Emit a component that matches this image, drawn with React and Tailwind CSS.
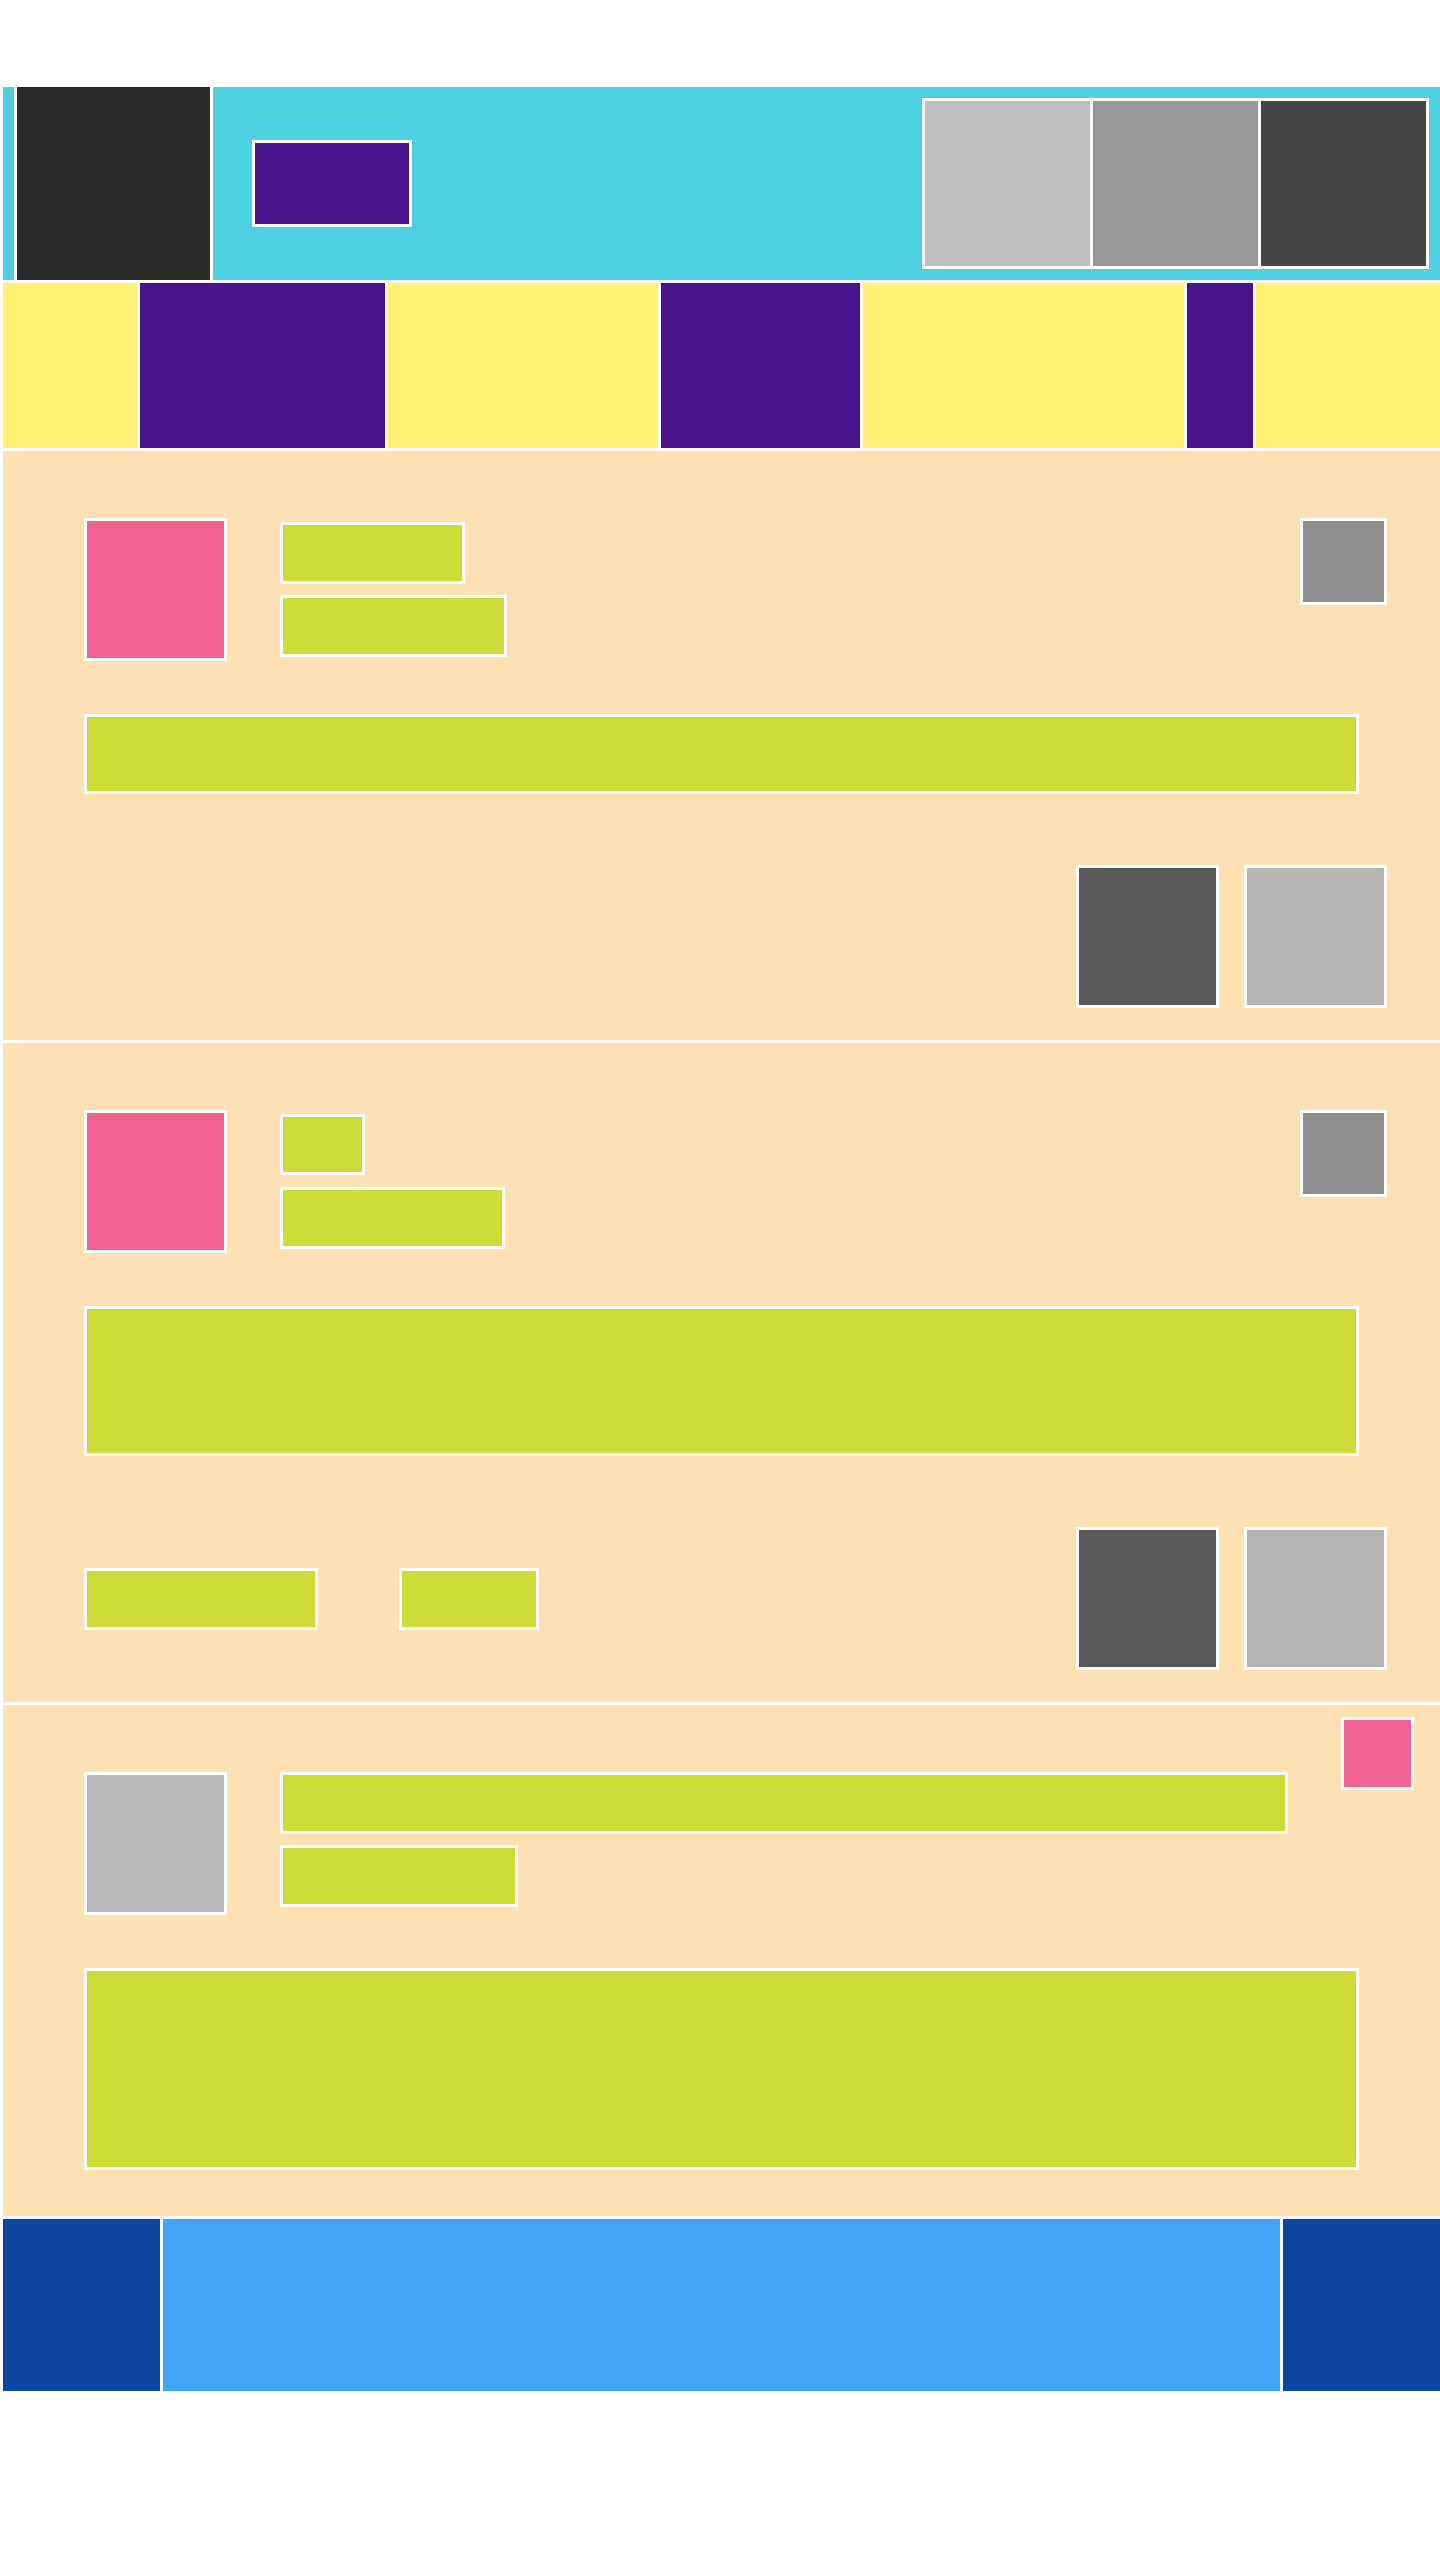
import React from 'react';

// wireframe blocks: every box carries a 3px white frame
const Box = ({ className = '' }) => (
	<div className={`shrink-0 border-[3px] border-white ${className}`} />
);

const Header = () => (
	<header className="flex h-[193px] items-stretch bg-[#4dd0e1] pl-[11px] pr-[11px]">
		<div className="w-[199px] shrink-0 border-x-[3px] border-white bg-[#2b2b2b]" />
		<div className="ml-[39px] flex items-center">
			<Box className="h-[87px] w-[160px] bg-[#4a148c]" />
		</div>
		<div className="ml-auto my-[11px] flex gap-[3px] bg-white p-[3px]">
			<div className="h-[165px] w-[165px] bg-[#bebebe]" />
			<div className="h-[165px] w-[165px] bg-[#979797]" />
			<div className="h-[165px] w-[165px] bg-[#454545]" />
		</div>
	</header>
);

const Nav = () => (
	<nav className="flex h-[165px] gap-[3px] bg-white">
		<div className="w-[134px] bg-[#fff176]" />
		<div className="w-[245px] bg-[#4a148c]" />
		<div className="w-[270px] bg-[#fff176]" />
		<div className="w-[199px] bg-[#4a148c]" />
		<div className="w-[321px] bg-[#fff176]" />
		<div className="w-[66px] bg-[#4a148c]" />
		<div className="flex-1 bg-[#fff176]" />
	</nav>
);

const Actions = () => (
	<div className="ml-auto flex gap-[25px]">
		<Box className="h-[143px] w-[143px] bg-[#5a5a5a]" />
		<Box className="h-[143px] w-[143px] bg-[#b4b4b4]" />
	</div>
);

const PostOne = () => (
	<section className="bg-[#ffe0b2] pl-[81px] pr-[81px] pt-[67px] pb-[32px]">
		<div className="-mr-[28px] flex items-start">
			<Box className="h-[143px] w-[143px] bg-[#f06292]" />
			<div className="ml-[53px] mt-[4px] flex flex-col gap-[11px]">
				<Box className="h-[62px] w-[185px] bg-[#cddc39]" />
				<Box className="h-[62px] w-[227px] bg-[#cddc39]" />
			</div>
			<Box className="ml-auto h-[87px] w-[87px] bg-[#8f8f8f]" />
		</div>
		<Box className="mt-[53px] h-[80px] w-full bg-[#cddc39]" />
		<div className="-mr-[28px] mt-[71px] flex items-center">
			<Actions />
		</div>
	</section>
);

const PostTwo = () => (
	<section className="bg-[#ffe0b2] pl-[81px] pr-[81px] pt-[67px] pb-[32px]">
		<div className="-mr-[28px] flex items-start">
			<Box className="h-[143px] w-[143px] bg-[#f06292]" />
			<div className="ml-[53px] mt-[4px] flex flex-col gap-[12px]">
				<Box className="h-[61px] w-[85px] bg-[#cddc39]" />
				<Box className="h-[62px] w-[225px] bg-[#cddc39]" />
			</div>
			<Box className="ml-auto h-[87px] w-[87px] bg-[#8f8f8f]" />
		</div>
		<Box className="mt-[53px] h-[150px] w-full bg-[#cddc39]" />
		<div className="-mr-[28px] mt-[71px] flex items-center">
			<Box className="h-[62px] w-[234px] bg-[#cddc39]" />
			<Box className="ml-[81px] h-[62px] w-[140px] bg-[#cddc39]" />
			<Actions />
		</div>
	</section>
);

const PostThree = () => (
	<section className="relative bg-[#ffe0b2] pl-[81px] pr-[81px] pt-[67px] pb-[46px]">
		<Box className="absolute right-[26px] top-[12px] h-[73px] w-[73px] bg-[#f06292]" />
		<div className="flex items-start">
			<Box className="h-[143px] w-[143px] bg-[#bababa]" />
			<div className="ml-[53px] flex flex-col gap-[11px]">
				<Box className="h-[62px] w-[1008px] bg-[#cddc39]" />
				<Box className="h-[62px] w-[238px] bg-[#cddc39]" />
			</div>
		</div>
		<Box className="mt-[53px] h-[202px] w-full bg-[#cddc39]" />
	</section>
);

const Footer = () => (
	<footer className="flex h-[172px] gap-[3px] bg-white">
		<div className="w-[157px] bg-[#0d47a1]" />
		<div className="flex-1 bg-[#42a5f5]" />
		<div className="w-[157px] bg-[#0d47a1]" />
	</footer>
);

const App = () => (
	<div className="min-h-screen bg-white pl-[3px] pt-[87px] font-['Liberation_Sans',sans-serif]">
		<div className="flex flex-col gap-[3px]">
			<Header />
			<Nav />
			<PostOne />
			<PostTwo />
			<PostThree />
			<Footer />
		</div>
	</div>
);

export default App;
